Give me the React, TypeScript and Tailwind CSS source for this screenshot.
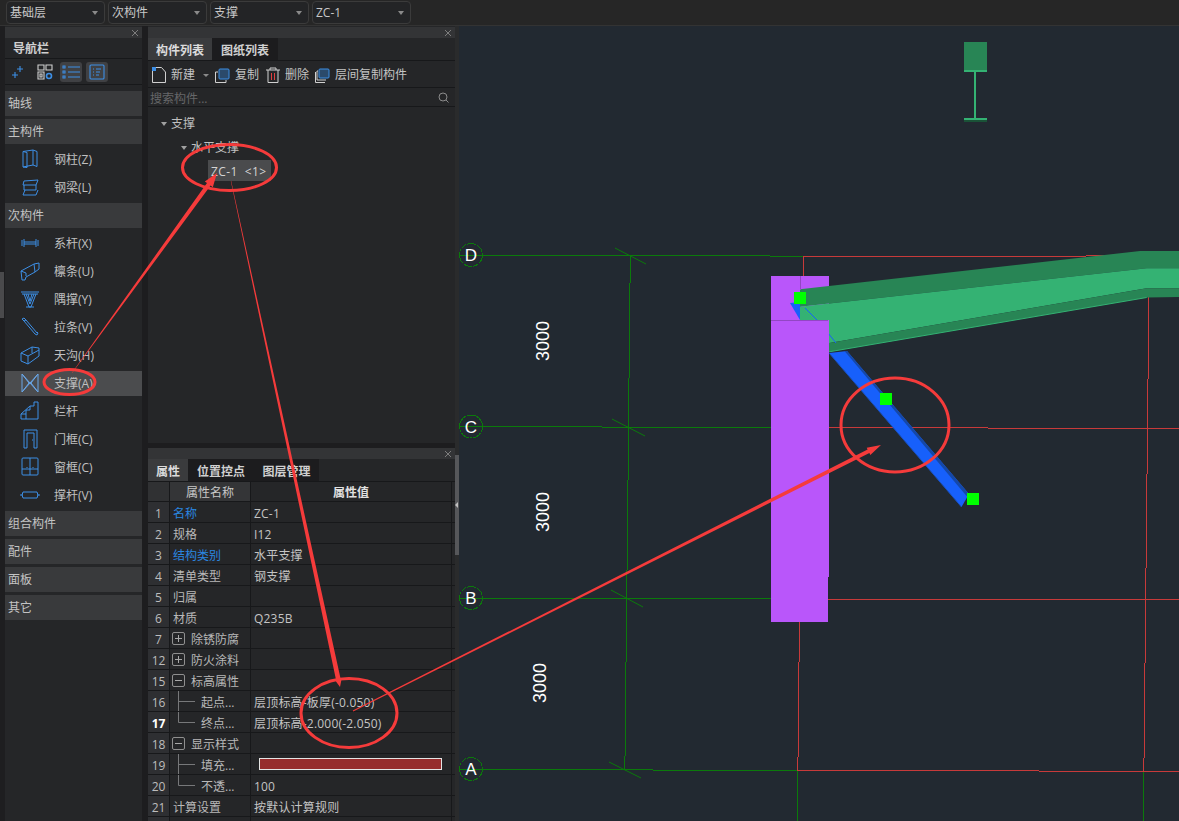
import React from "react";

const FONT = "font-['Open_Sans','Noto_Sans_CJK_SC',sans-serif]";
const B = "#3d8fe6";

const Ic = ({ children, w = 22, h = 22 }: { children: React.ReactNode; w?: number; h?: number }) => (
  <svg width={w} height={h} viewBox="0 0 22 22" fill="none" stroke={B} strokeWidth="1" className="shrink-0">
    {children}
  </svg>
);

const icons: Record<string, React.ReactNode> = {
  col: <Ic><path d="M4 3.5l10-1.5v15l-10 2zM14 2l4 1.5v15L14 17M4 3.5l4 1V19.5M4 19l4 .5" /></Ic>,
  beam: <Ic><path d="M5 5l14-1-2 5H4zM5 9v5h12V9M6 14l-2 5h13l2-5" /></Ic>,
  tie: <Ic><path d="M3 8v6M5 7v8M5 10h12M5 12h12M17 7v8M19 8v6" /></Ic>,
  pur: <Ic><path d="M2 11l13-7 5-1v6l-4 3-9 5-1 3-3 0zM15 4l1 8M2 11l5 2v3" /></Ic>,
  bracket: <Ic><path d="M2 4h18M3 6h16M5 6l5 13h2l5-13M7 6l4 10 4-10M9 6l2 7 2-7M7 19h8" /></Ic>,
  rod: <Ic><path d="M3 3l2-1 2 2-2 1zM5 5l11 13M7 4l11 13M16 18l2 1 1-2-1-1" /></Ic>,
  gutter: <Ic><path d="M2 9l11-6 7 1v8L9 20l-7-3zM2 9l7 3v8M9 12l11-6M13 3v6" /></Ic>,
  brace: <Ic><path d="M3 2v18M19 2v18M3 2l16 18M19 2L3 20M3 2l7 9-7 9M19 2l-7 9 7 9" stroke="#6aa7e8" /></Ic>,
  rail: <Ic><path d="M2 19v-5h5v-4h4V6h4V2h4v17zM2 14l9-8M7 14v5" /></Ic>,
  door: <Ic><path d="M5 20V2h13v18h-3V5H8v15zM13 12h1" /></Ic>,
  win: <Ic><rect x="3" y="2" width="16" height="17" rx="1" /><path d="M3 13h16M11 2v17M8 11v1M14 11v1" /></Ic>,
  strut: <Ic><path d="M1 11h3M18 11h3M4 8h14l1 3-1 3H4l-1-3z" /></Ic>,
};

const Row = ({ children }: { children: React.ReactNode }) => (
  <div className="h-[28px] flex items-center">{children}</div>
);
const Sec = ({ t }: { t: string }) => (
  <Row>
    <div className="h-[25px] w-full bg-[#393a3c] flex items-center pl-[3px] pt-[2px] text-[#c4c4c4]">{t}</div>
  </Row>
);
const Item = ({ t, ic, sel }: { t: string; ic: string; sel?: boolean }) => (
  <Row>
    <div className={`h-[25px] w-full flex items-center pl-[14px] text-[#c0c0c0] ${sel ? "bg-[#4b4c4e]" : ""}`}>
      <span className="w-[35px] flex">{icons[ic]}</span>
      <span className="pt-[2px]">{t}</span>
    </div>
  </Row>
);

const Select = ({ t }: { t: string }) => (
  <div className="w-[99px] h-[23px] rounded-[4px] border border-[#3b3b3b] bg-[#232426] flex items-center justify-between pl-[3px] pr-[6px] text-[#c8c8c8]">
    <span>{t}</span>
    <span className="w-0 h-0 border-x-[3px] border-x-transparent border-t-[4px] border-t-[#8a8a8a]" />
  </div>
);

const PanelHead = () => (
  <div className="h-[11px] bg-[#333436] flex items-center justify-end pr-[3px] shrink-0">
    <svg width="8" height="8" viewBox="0 0 8 8" stroke="#7d7d7d" strokeWidth="1">
      <path d="M1 1l6 6M7 1L1 7" />
    </svg>
  </div>
);

const Tri = () => <span className="w-0 h-0 border-x-[3.5px] border-x-transparent border-t-[4px] border-t-[#a0a0a0] mr-[4px]" />;

const PM = ({ plus }: { plus?: boolean }) => (
  <span className="relative w-[13px] h-[13px] -ml-px border border-[#8f8f8f] rounded-[2px] mr-[6px] flex items-center justify-center shrink-0">
    <span className="w-[7px] h-px bg-[#a8a8a8]" />
    {plus && <span className="absolute w-px h-[7px] bg-[#a8a8a8]" />}
  </span>
);

const Conn = ({ last }: { last?: boolean }) => (
  <svg width="28" height="21" viewBox="0 0 28 21" stroke="#77787a" strokeWidth="1" fill="none" className="shrink-0">
    <path d={last ? "M5.5 0v10.5H22" : "M5.5 0v21M5.5 10.5H22"} />
  </svg>
);

const L = ({ children }: { children: React.ReactNode }) => <span className="pt-[4px]">{children}</span>;

type P = { n: string; name?: React.ReactNode; v?: React.ReactNode; blue?: boolean; bold?: boolean };
const props: P[] = [
  { n: "1", name: <L>名称</L>, v: <L>ZC-1</L>, blue: true },
  { n: "2", name: <L>规格</L>, v: <L>I12</L> },
  { n: "3", name: <L>结构类别</L>, v: <L>水平支撑</L>, blue: true },
  { n: "4", name: <L>清单类型</L>, v: <L>钢支撑</L> },
  { n: "5", name: <L>归属</L> },
  { n: "6", name: <L>材质</L>, v: <L>Q235B</L> },
  { n: "7", name: <><PM plus /><L>除锈防腐</L></> },
  { n: "12", name: <><PM plus /><L>防火涂料</L></> },
  { n: "15", name: <><PM /><L>标高属性</L></> },
  { n: "16", name: <><Conn /><L>起点...</L></>, v: <L>层顶标高-板厚(-0.050)</L> },
  { n: "17", name: <><Conn last /><L>终点...</L></>, v: <L>层顶标高-2.000(-2.050)</L>, bold: true },
  { n: "18", name: <><PM /><L>显示样式</L></> },
  { n: "19", name: <><Conn /><L>填充...</L></>, v: <span className="block w-[183px] h-[12px] ml-[5px] bg-[#962c2c] border border-[#e4e4e4]" /> },
  { n: "20", name: <><Conn last /><L>不透...</L></>, v: <L>100</L> },
  { n: "21", name: <L>计算设置</L>, v: <L>按默认计算规则</L> },
  { n: "" },
];

const TableRow = ({ p }: { p: P }) => (
  <div className="grid grid-cols-[22px_81px_201px] h-[21px] border-b border-[#17181a] shrink-0">
    <div className={`bg-[#2e2f32] border-r border-[#17181a] flex items-center justify-center pt-[4px] ${p.bold ? "font-bold text-white" : "text-[#bdbdbd]"}`}>{p.n}</div>
    <div className={`border-r border-[#17181a] flex items-center pl-[3px] overflow-hidden whitespace-nowrap ${p.blue ? "text-[#2a86e0]" : "text-[#b8b8b8]"}`}>{p.name}</div>
    <div className="border-r border-[#17181a] flex items-center pl-[3px] text-[#c4c4c4] whitespace-nowrap tracking-[0.2px]">{p.v}</div>
  </div>
);

const Bubble = ({ cx, cy, l }: { cx: number; cy: number; l: string }) => (
  <g>
    <circle cx={cx} cy={cy} r="11.5" stroke="#0b7a0b" strokeWidth="1" fill="none" strokeDasharray="3 .3" />
    <text x={cx} y={cy + 6} textAnchor="middle" fontSize="17" fill="#fff" fontFamily="'Liberation Sans',sans-serif">{l}</text>
  </g>
);

const Dim = ({ x, y }: { x: number; y: number }) => (
  <text transform={`translate(${x} ${y}) rotate(-90)`} textAnchor="middle" fontSize="18" fill="#fff" fontFamily="'Liberation Sans',sans-serif">3000</text>
);

const G = "#0b7a0b";
const R = "#c83a3a";

const Cad = () => (
  <svg width="720" height="795" viewBox="459 26 720 795" fill="none" shapeRendering="crispEdges" className="block">
    <g stroke={G} strokeWidth="1">
      <path d="M459 255.5H770M770 256.5H803" />
      <path d="M459 426.5H602M602 427.5H771" />
      <path d="M459 598.5H771" />
      <path d="M459 769.5H653M653 770.5H797" />
      <path d="M630.5 255V283M629.5 283V378M628.5 378V480M627.5 480V570M626.5 570V662M625.5 662V756M624.5 756V769M797.5 771V821M1143.5 771V821" />
    </g>
    <g stroke={G} strokeWidth="1" shapeRendering="auto">
      <path d="M615 248L646 264M612 419L645 436M611 590L643 607M609 762L641 778" />
    </g>
    <g stroke={R} strokeWidth="1">
      <path d="M803 256.5H1086M1086 255.5H1146M803.5 256V276" />
      <path d="M828 427.5H988M988 428.5H1179M828 599.5H1179M797 770.5H1039M1039 771.5H1179" />
      <path d="M1148.5 297V379M1147.5 379V474M1146.5 474V568M1145.5 568V663M1144.5 663V758M1143.5 758V771" />
      <path d="M799.5 622V662M798.5 662V757M797.5 757V770" />
    </g>
    <rect x="964" y="42" width="23" height="28" fill="#288555" />
    <rect x="964" y="70" width="23" height="2" fill="#34b273" />
    <rect x="974" y="72" width="2" height="46" fill="#34b273" />
    <rect x="964" y="118" width="23" height="2" fill="#34b273" />
    <rect x="964" y="120" width="23" height="2" fill="#1a5237" />
    <Bubble cx={471} cy={255} l="D" />
    <Bubble cx={471} cy={426.5} l="C" />
    <Bubble cx={471} cy={598} l="B" />
    <Bubble cx={471} cy={769} l="A" />
    <Dim x={549} y={341} />
    <Dim x={549} y={512} />
    <Dim x={546} y={683} />
    <rect x="771" y="276" width="58" height="44" fill="#b956fa" />
    <g shapeRendering="auto">
      <polygon points="790,303 800,302 802,320 800,320" fill="#1760fb" />
      <polygon points="800,289.3 1140,251 1179,251 1179,268.3 1146.7,268.3 800,306.7" fill="#288555" />
      <polygon points="800,306.7 1146.7,268.3 1179,268.3 1179,288.3 1146.7,288.3 828,343.3 828,320 800,320" fill="#34b273" />
      <polygon points="828,343.3 1146.7,288.3 1179,288.3 1179,297 1146.7,297.5 828,352" fill="#288555" />
      <path d="M828 352L1146.7 297.5" stroke="#34b273" strokeWidth="1" />
      <path d="M805 308L817 320M828 333L836 343" stroke="#1760fb" strokeWidth="1" />
      <polygon points="829,353 847,351 969,494 961.5,507" fill="#1760fb" />
      <polygon points="844.5,351 847,351 969,494 966.5,496" fill="#1548a8" />
      <path d="M829 353L961.5 507" stroke="#1a50bc" strokeWidth="1" />
    </g>
    <rect x="771" y="320" width="58" height="257" fill="#b956fa" />
    <rect x="771" y="577" width="57" height="45" fill="#b956fa" />
    <path d="M771 320.5H828" stroke="#9246c4" strokeWidth="1" />
    <path d="M800.5 276V290" stroke="#9246c4" strokeWidth="1" />
    <rect x="794" y="292" width="12" height="12" fill="#00ff00" />
    <rect x="880" y="393" width="12" height="12" fill="#00ff00" />
    <rect x="967" y="493" width="12" height="12" fill="#00ff00" />
  </svg>
);

const Overlay = () => (
  <svg width="1179" height="821" viewBox="0 0 1179 821" fill="none" className="absolute inset-0 pointer-events-none">
    <g stroke="#f53b3b" strokeWidth="3">
      <ellipse cx="229.5" cy="167.5" rx="47" ry="23" />
      <ellipse cx="69.5" cy="382" rx="25.5" ry="12.5" />
      <ellipse cx="349" cy="713" rx="48" ry="34.5" />
      <ellipse cx="895" cy="425" rx="54" ry="47" />
    </g>
    <g fill="#f53b3b">
      <polygon points="71.8,372.9 72.2,373.1 210.6,185.6 212.8,187.2 217,173 204.8,181.4 207,183" />
      <polygon points="230.8,181 231.2,181 340.6,678.7 341.7,678.5 340,687 334.9,679.9 336,679.7" />
      <polygon points="352.8,710.6 353.2,711.4 869.4,453.1 870.3,454.9 881,445 866.7,447.7 867.6,449.5" />
    </g>
  </svg>
);

export default function App() {
  return (
    <div className={`relative w-[1179px] h-[821px] overflow-hidden bg-[#1d1d1f] text-[12px] leading-none ${FONT} flex flex-col`}>
      <div className="h-[26px] bg-[#262626] border-b border-[#333] flex gap-[3px] pl-[6px] pt-px shrink-0">
        <Select t="基础层" />
        <Select t="次构件" />
        <Select t="支撑" />
        <Select t="ZC-1" />
      </div>
      <div className="flex-1 flex min-h-0">
        <div className="w-[5px] pt-[246px] bg-[#1e1e20] shrink-0">
          <div className="w-[4px] h-[46px] bg-[#4a4a4c]" />
        </div>
        <div className="w-[137px] bg-[#252628] pt-px shrink-0">
          <PanelHead />
          <div className="h-[21px] flex items-center pl-[8px] pt-[2px] border-b border-[#17181a] text-[#d0d0d0] font-bold">导航栏</div>
          <div className="h-[26px] border-b border-[#17181a] flex items-center pl-[7px]">
            <svg width="11" height="12" viewBox="0 0 11 12" stroke={B} strokeWidth="1.1" className="mr-[14px]">
              <path d="M8 0v6M5 3h6M3 6v6M0 9h6" />
            </svg>
            <svg width="16" height="16" viewBox="0 0 16 16" fill="none" strokeWidth="1.1" className="mr-[7px]">
              <path d="M1 1h6v5H1zM9 1h6v5H9zM1 8h6v7H1zM3 10h2v3H3z" stroke="#d0d0d0" />
              <circle cx="12" cy="12" r="2.5" stroke={B} strokeWidth="1.6" />
            </svg>
            <span className="w-[22px] h-[20px] bg-[#404144] rounded-[3px] flex items-center justify-center mr-[4px]">
              <svg width="18" height="14" viewBox="0 0 18 14" stroke={B} fill="none" strokeWidth="1.1">
                <path d="M6 2h12M6 7h12M6 12h12M1 1h2v2H1zM1 6h2v2H1zM1 11h2v2H1z" />
              </svg>
            </span>
            <span className="w-[22px] h-[20px] bg-[#404144] rounded-[3px] flex items-center justify-center">
              <svg width="16" height="16" viewBox="0 0 16 16" stroke={B} fill="none" strokeWidth="1.1">
                <rect x="1" y="1" width="14" height="14" rx="1" />
                <path d="M4 5h1M7 5h5M4 8h1M7 8h4M4 11h1M7 11h3" />
              </svg>
            </span>
          </div>
          <div className="pt-[4px]">
            <Sec t="轴线" />
            <Sec t="主构件" />
            <Item t="钢柱(Z)" ic="col" />
            <Item t="钢梁(L)" ic="beam" />
            <Sec t="次构件" />
            <Item t="系杆(X)" ic="tie" />
            <Item t="檩条(U)" ic="pur" />
            <Item t="隅撑(Y)" ic="bracket" />
            <Item t="拉条(V)" ic="rod" />
            <Item t="天沟(H)" ic="gutter" />
            <Item t="支撑(A)" ic="brace" sel />
            <Item t="栏杆" ic="rail" />
            <Item t="门框(C)" ic="door" />
            <Item t="窗框(C)" ic="win" />
            <Item t="撑杆(V)" ic="strut" />
            <Sec t="组合构件" />
            <Sec t="配件" />
            <Sec t="面板" />
            <Sec t="其它" />
          </div>
        </div>
        <div className="w-[6px] shrink-0" />
        <div className="w-[307px] flex flex-col shrink-0">
          <div className="h-[417px] bg-[#252628] pt-px flex flex-col shrink-0">
            <PanelHead />
            <div className="h-[23px] flex items-stretch bg-[#252628] border-b border-[#17181a] font-bold">
              <div className="w-[64px] bg-[#3a3b3d] flex items-center justify-center pt-[3px] text-[#dcdcdc]">构件列表</div>
              <div className="w-[66px] bg-[#1c1c1e] flex items-center justify-center pt-[3px] text-[#d0d0d0]">图纸列表</div>
            </div>
            <div className="h-[27px] border-b border-[#17181a] flex items-center pl-[4px] pt-[2px] text-[#c4c4c4]">
              <svg width="15" height="16" viewBox="0 0 15 16" fill="none" className="mr-[4px]">
                <path d="M.5 4v11.5h13V5l-4-4.5H4" stroke="#d0d0d0" />
                <rect x="0" y="0" width="4" height="4" fill={B} />
              </svg>
              <span>新建</span>
              <span className="w-0 h-0 ml-[8px] border-x-[3px] border-x-transparent border-t-[3px] border-t-[#8a8a8a] mr-[6px]" />
              <svg width="15" height="15" viewBox="0 0 15 15" fill="none" className="mr-[5px]">
                <path d="M3 4H.5v10.5H11V12" stroke="#d0d0d0" />
                <rect x="4" y="1" width="10" height="10" rx="1" stroke={B} fill="#2b4a6b" />
              </svg>
              <span>复制</span>
              <svg width="14" height="16" viewBox="0 0 14 16" fill="none" className="ml-[7px] mr-[5px]">
                <path d="M0 3h14M4 3V1h6v2M2 3v12.5h10V3" stroke="#d0d0d0" />
                <path d="M5.5 6v7M8.5 6v7" stroke="#e04040" />
              </svg>
              <span>删除</span>
              <svg width="15" height="15" viewBox="0 0 15 15" fill="none" className="ml-[6px] mr-[5px]">
                <path d="M3 3H2v9h9M.5 4v10.5H10" stroke="#d0d0d0" />
                <rect x="4" y="1" width="10" height="9" rx="1" stroke={B} fill="#2b4a6b" />
              </svg>
              <span>层间复制构件</span>
            </div>
            <div className="h-[19px] border-b border-[#17181a] flex items-center justify-between pl-[2px] pr-[6px] text-[#666769]">
              <span className="pt-[3px]">搜索构件...</span>
              <svg width="11" height="11" viewBox="0 0 11 11" fill="none" stroke="#8a8a8a"><circle cx="5" cy="5" r="4" /><path d="M8 8l2.5 2.5" /></svg>
            </div>
            <div className="pl-[13px] pt-[5px] text-[#c0c0c0]">
              <div className="h-[24px] flex items-center"><Tri />支撑</div>
              <div className="h-[24px] flex items-center pl-[20px]"><Tri />水平支撑</div>
              <div className="ml-[47px] w-[63px] h-[21px] bg-[#4a4b4d] flex items-center pl-[3px] pt-[2px] whitespace-pre tracking-[0.4px] text-[#d4d4d4]">ZC-1  {"<"}1{">"}</div>
            </div>
          </div>
          <div className="h-[5px] shrink-0" />
          <div className="flex-1 bg-[#252628] flex flex-col min-h-0 overflow-hidden">
            <PanelHead />
            <div className="h-[23px] flex items-stretch border-b border-[#17181a] font-bold shrink-0">
              <div className="w-[40px] bg-[#3a3b3d] flex items-center justify-center pt-[3px] text-[#dcdcdc]">属性</div>
              <div className="w-[66px] bg-[#1c1c1e] flex items-center justify-center pt-[3px] text-[#d0d0d0]">位置控点</div>
              <div className="w-[65px] bg-[#1c1c1e] flex items-center justify-center pt-[3px] text-[#d0d0d0]">图层管理</div>
            </div>
            <div className="grid grid-cols-[22px_81px_201px] h-[20px] border-b border-[#17181a] shrink-0">
              <div className="bg-[#303133] border-r border-[#17181a]" />
              <div className="bg-[#343537] border-r border-[#17181a] flex items-center justify-center pt-[3px] text-[#c8c8c8]">属性名称</div>
              <div className="border-r border-[#17181a] flex items-center justify-center pt-[3px] font-bold text-[#e0e0e0]">属性值</div>
            </div>
            {props.map((p) => <TableRow key={p.n} p={p} />)}
          </div>
        </div>
        <div className="w-[4px] bg-[#2a2b2c] pt-[429px] shrink-0">
          <div className="w-[4px] h-[100px] bg-[#56575a] flex items-center">
            <span className="w-0 h-0 border-y-[3px] border-y-transparent border-r-[3px] border-r-[#c0c0c0]" />
          </div>
        </div>
        <div className="flex-1 bg-[#222931] min-w-0">
          <Cad />
        </div>
      </div>
      <Overlay />
    </div>
  );
}
